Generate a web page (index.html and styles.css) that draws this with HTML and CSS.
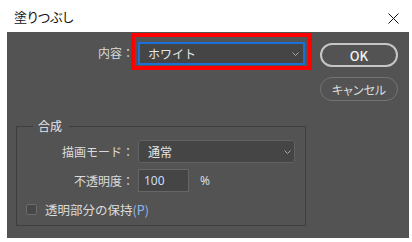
FILE: index.html
```html
<!DOCTYPE html>
<html lang="ja">

<head>
    <meta charset="UTF-8">
    <meta name="viewport" content="width=device-width, initial-scale=1.0">
    <title>塗りつぶし</title>
    <link rel="stylesheet" href="styles.css">
</head>

<body>
    <div class="titlebar">
        <span class="title">塗りつぶし</span>
        <svg class="close" width="11" height="11" viewBox="0 0 11 11">
            <path d="M0.5 0.5 L10.5 10.5 M10.5 0.5 L0.5 10.5" stroke="#111" stroke-width="1" fill="none" />
        </svg>
    </div>

    <div class="panel">
        <div class="main">
            <div class="content-row">
                <label class="label">内容：</label>
                <div class="highlight">
                    <div class="select focus">
                        <span>ホワイト</span>
                        <svg class="chevron" width="7" height="4" viewBox="0 0 7 4">
                            <path d="M0.5 0.5 L3.5 3.5 L6.5 0.5" stroke="#a8a8a8" fill="none" />
                        </svg>
                    </div>
                </div>
            </div>

            <fieldset class="group">
                <legend>合成</legend>
                <div class="grid">
                    <label class="label">描画モード：</label>
                    <div class="select mode">
                        <span>通常</span>
                        <svg class="chevron" width="7" height="4" viewBox="0 0 7 4">
                            <path d="M0.5 0.5 L3.5 3.5 L6.5 0.5" stroke="#a8a8a8" fill="none" />
                        </svg>
                    </div>

                    <label class="label">不透明度：</label>
                    <div class="opacity">
                        <span class="input">100</span>
                        <span class="unit">%</span>
                    </div>

                    <label class="check">
                        <span class="box"></span>
                        <span>透明部分の保持<span class="key">(P)</span></span>
                    </label>
                </div>
            </fieldset>
        </div>

        <div class="buttons">
            <button class="btn primary">OK</button>
            <button class="btn">キャンセル</button>
        </div>
    </div>
</body>

</html>
```

FILE: styles.css
```css
body {
    margin: 0;
    background: #ffffff;
    font-family: "Noto Sans CJK JP", "Noto Sans", sans-serif;
    font-size: 12px;
    color: #dcdcdc;
}

.titlebar {
    height: 32px;
    display: flex;
    align-items: center;
    justify-content: space-between;
    padding: 0 13px 0 14px;
}

.title {
    color: #111111;
    font-size: 13px;
    font-feature-settings: "palt";
}

.close {
    display: block;
    margin-top: 4px;
}

.panel {
    display: flex;
    width: 402px;
    height: 206px;
    margin-left: 7px;
    background: #535353;
    padding-top: 1px;
    box-sizing: border-box;
}

.main {
    width: 296px;
    margin-left: 9px;
}

.content-row {
    display: flex;
    align-items: center;
}

.content-row .label {
    width: 118px;
    padding-top: 2px;
}

.label {
    text-align: right;
    line-height: 14px;
}

.highlight {
    margin-left: -3px;
    border: 4px solid #ff0000;
    padding: 5px 3px 1px 3px;
}

.select {
    display: flex;
    align-items: center;
    justify-content: space-between;
    height: 23px;
    padding: 0 4px 0 9px;
    box-sizing: border-box;
    background: #454545;
    color: #e6e6e6;
}

.select.focus {
    width: 167px;
    border: 2px solid #1b6fd6;
    padding-left: 8px;
}

.select.mode {
    width: 157px;
    border: 1px solid #616161;
    border-radius: 3px;
    padding-right: 3px;
}

.group {
    width: 290px;
    box-sizing: border-box;
    margin: 49px 0 0 0;
    padding: 7px 0 5px 0;
    border: 1px solid #3e3e3e;
}

.group legend {
    margin-left: 16px;
    padding: 0 7px 0 5px;
    font-size: 12px;
    line-height: 14px;
    color: #e6e6e6;
}

.grid {
    display: grid;
    grid-template-columns: 117px 1fr;
    column-gap: 4px;
    row-gap: 6px;
    align-items: center;
}

.opacity {
    display: flex;
    align-items: center;
}

.input {
    width: 51px;
    height: 23px;
    box-sizing: border-box;
    border: 1px solid #666666;
    background: #454545;
    padding-left: 5px;
    line-height: 21px;
    color: #c8defa;
    font-family: "Noto Sans", sans-serif;
}

.unit {
    margin-left: 11px;
    color: #dcdcdc;
    font-family: "Noto Sans", sans-serif;
}

.check {
    grid-column: 1 / -1;
    display: flex;
    align-items: center;
    height: 22px;
    padding-left: 9px;
    font-size: 12.5px;
}

.box {
    width: 11px;
    height: 11px;
    box-sizing: border-box;
    border: 1px solid #6a6a6a;
    border-radius: 2px;
    background: #474747;
    margin-right: 8px;
}

.key {
    color: #8fb8f0;
}

.buttons {
    display: flex;
    flex-direction: column;
    gap: 10px;
    margin-left: 8px;
    padding-top: 10px;
}

.btn {
    width: 78px;
    height: 24px;
    border-radius: 12px;
    border: 1px solid #747474;
    background: transparent;
    color: #dcdcdc;
    font-family: "Noto Sans CJK JP", sans-serif;
    font-size: 12px;
    font-feature-settings: "palt";
    padding: 0;
    cursor: pointer;
}

.btn.primary {
    border: 2px solid #c6c6c6;
    color: #f2f2f2;
    font-size: 13px;
    font-weight: 500;
}
```
